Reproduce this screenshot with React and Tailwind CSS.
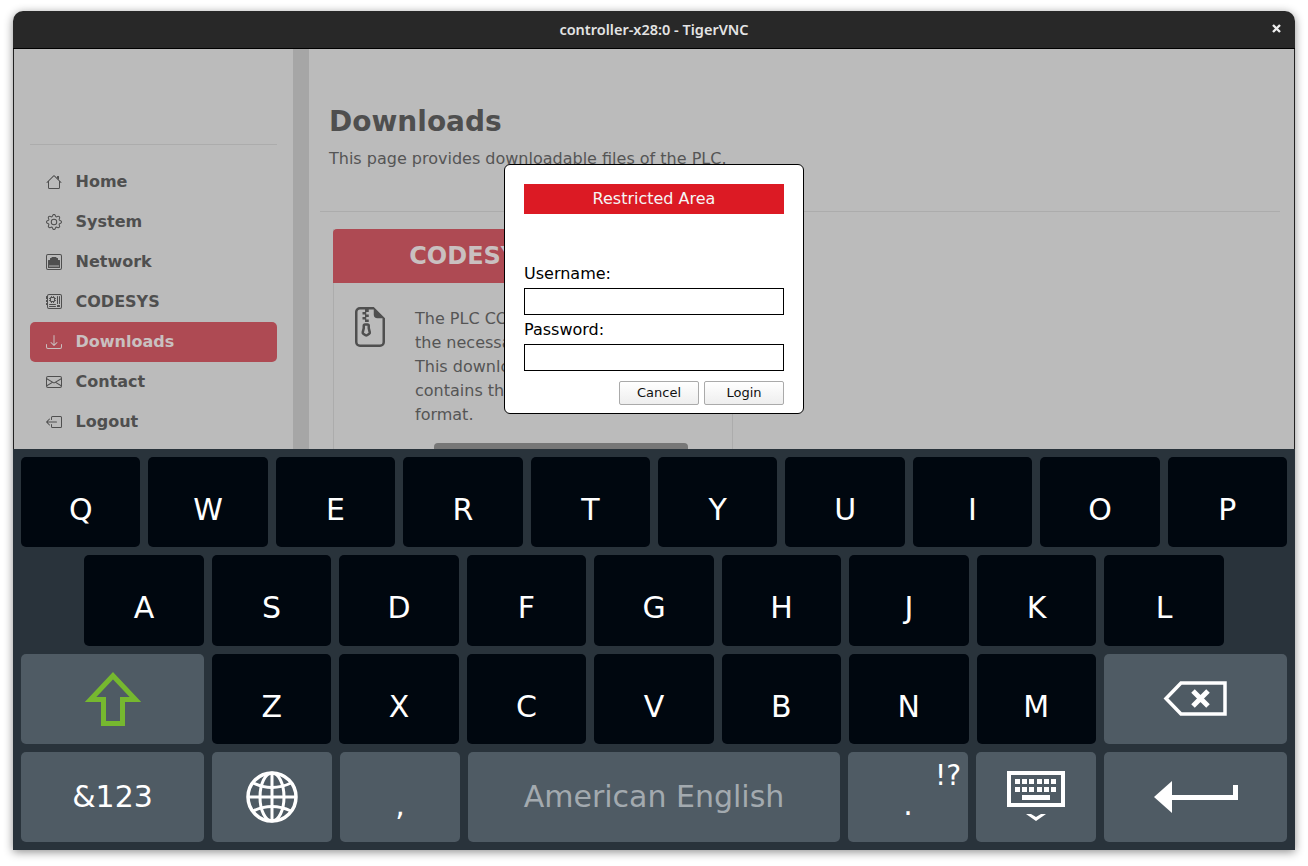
import React from 'react';
import {
  BsGear,
  BsEthernet,
  BsMotherboard,
  BsDownload,
  BsEnvelope,
  BsBoxArrowLeft,
  BsFileEarmarkZip,
} from 'react-icons/bs';

const HouseIcon = ({ size }) => (
  <svg width={size} height={size} viewBox="0 0 16 16" fill="currentColor">
    <path d="M2 13.5V7h1v6.5a.5.5 0 0 0 .5.5h9a.5.5 0 0 0 .5-.5V7h1v6.5a1.5 1.5 0 0 1-1.5 1.5h-9A1.5 1.5 0 0 1 2 13.5zm11-11V6l-2-2V2.5a.5.5 0 0 1 .5-.5h1a.5.5 0 0 1 .5.5z" />
    <path d="M7.293 1.5a1 1 0 0 1 1.414 0l6.647 6.646a.5.5 0 0 1-.708.708L8 2.207 1.354 8.854a.5.5 0 1 1-.708-.708L7.293 1.5z" />
  </svg>
);

const NAV_ITEMS = [
  { label: 'Home', icon: HouseIcon },
  { label: 'System', icon: BsGear },
  { label: 'Network', icon: BsEthernet },
  { label: 'CODESYS', icon: BsMotherboard },
  { label: 'Downloads', icon: BsDownload, active: true },
  { label: 'Contact', icon: BsEnvelope },
  { label: 'Logout', icon: BsBoxArrowLeft },
];

const ROW_1 = ['Q', 'W', 'E', 'R', 'T', 'Y', 'U', 'I', 'O', 'P'];
const ROW_2 = ['A', 'S', 'D', 'F', 'G', 'H', 'J', 'K', 'L'];
const ROW_3 = ['Z', 'X', 'C', 'V', 'B', 'N', 'M'];

const ShiftIcon = () => (
  <svg width="56" height="54" viewBox="0 0 56 54" fill="none">
    <path d="M28 3.7 L50.5 27.5 H37.5 V51.5 H18.5 V27.5 H5.5 Z" stroke="#76b82f" strokeWidth="5" strokeLinejoin="miter" />
  </svg>
);

const BackspaceIcon = () => (
  <svg width="64" height="35" viewBox="0 0 64 35" fill="none">
    <path d="M62 2 H18 L3 17.5 L18 33 H62 Z" stroke="#fff" strokeWidth="3.5" />
    <path d="M30 10 L45 25 M45 10 L30 25" stroke="#fff" strokeWidth="5" />
  </svg>
);

const GlobeIcon = () => (
  <svg width="52" height="52" viewBox="0 0 52 52" fill="none" stroke="#fff" strokeWidth="3">
    <circle cx="26" cy="26" r="24" strokeWidth="3.5" />
    <ellipse cx="26" cy="26" rx="12" ry="24" />
    <path d="M26 2 V50 M2 26 H50" />
    <path d="M7 12 Q26 21 45 12 M7 40 Q26 31 45 40" />
  </svg>
);

const KeyboardIcon = () => (
  <svg width="58" height="50" viewBox="0 0 58 50" fill="#fff" className="mb-[2px]">
    <rect x="2" y="2" width="54" height="32" fill="none" stroke="#fff" strokeWidth="4" />
    {[8, 15, 22, 30, 37, 44].map((x) => (
      <React.Fragment key={x}>
        <rect x={x} y="8" width="5" height="5" />
        <rect x={x} y="16" width="5" height="5" />
      </React.Fragment>
    ))}
    <rect x="15" y="24" width="28" height="5" />
    <path d="M19 43 H24 L29 46 L34 43 H39 L29 50 Z" />
  </svg>
);

const EnterIcon = () => (
  <svg width="84" height="32" viewBox="0 0 84 32" fill="#fff">
    <path d="M0 16 L18 0 V14 H79 V4 H84 V19 H18 V32 Z" />
  </svg>
);

const Key = ({ children, dark, className = '' }) => (
  <div
    className={`relative flex items-center justify-center rounded-[5px] ${
      dark ? 'bg-[#00070f]' : 'bg-[#4f5b64]'
    } ${className}`}
  >
    {children}
  </div>
);

const KeyLabel = ({ children }) => <span className="pt-[16px] text-[30px] leading-[36px]">{children}</span>;

const Sidebar = () => (
  <aside className="w-[279px] shrink-0 bg-[#bbbbbb] px-4 pt-[95px]">
    <div className="border-t border-[#acacac] pt-[17px]">
      {NAV_ITEMS.map(({ label, icon: Icon, active }) => (
        <div
          key={label}
          className={`flex h-10 items-center gap-[14px] rounded-[5px] pl-4 text-base font-bold ${
            active ? 'bg-[#ae4a53] text-[#c9c0c0]' : 'text-[#4f4f4f]'
          }`}
        >
          <Icon size={16} />
          <span className="-ml-[0.5px]">{label}</span>
        </div>
      ))}
    </div>
  </aside>
);

const MainPage = () => (
  <main className="min-w-0 flex-1 bg-[#bbbbbb] pl-[11px] pr-[14px] pt-[56px] text-[#555555]">
    <div className="border-b border-[#acacac] pb-[40px] pl-[9px]">
      <h1 className="text-[28px] font-bold leading-[34px] text-[#4f4f4f]">Downloads</h1>
      <p className="mt-2 text-base leading-6">This page provides downloadable files of the PLC.</p>
    </div>
    <div className="ml-[13px] mt-[17px] w-[400px] border-x border-[#acacac]">
      <div className="-mx-px flex h-[54px] items-center justify-center rounded-t-[4px] bg-[#ae4a53] text-2xl font-bold text-[#c9c0c0]">
        CODESYS Package
      </div>
      <div className="flex gap-[25px] pl-[16px] pt-[24px]">
        <BsFileEarmarkZip size={40} className="shrink-0 text-[#4f4f4f]" />
        <p className="text-base leading-6">
          The PLC CODESYS Runtime
          <br />
          the necessary libraries
          <br />
          This download package
          <br />
          contains them in ZIP
          <br />
          format.
        </p>
      </div>
      <div className="ml-[100px] mt-[16px] h-10 w-[254px] rounded-t-[4px] bg-[#777777]" />
    </div>
  </main>
);

const LoginDialog = () => (
  <div className="absolute left-[490px] top-[115px] h-[250px] w-[300px] rounded-[6px] border border-black bg-white px-[19px] pt-[19px] text-black">
    <div className="flex h-[30px] items-center justify-center bg-[#dc1a24] text-base text-[#f5f5f5]">Restricted Area</div>
    <label className="mt-[48px] block text-base leading-[24px]">Username:</label>
    <div className="mt-[2px] h-[27px] border border-black bg-white" />
    <label className="mt-[3px] block text-base leading-[24px]">Password:</label>
    <div className="mt-[2px] h-[27px] border border-black bg-white" />
    <div className="mt-[10px] flex justify-end gap-[5px]">
      {['Cancel', 'Login'].map((text) => (
        <button
          key={text}
          className="h-6 w-20 rounded-[2px] border border-[#aaaaaa] bg-gradient-to-b from-white to-[#eeeeee] text-[13px] text-[#111111]"
        >
          {text}
        </button>
      ))}
    </div>
  </div>
);

const Keyboard = () => (
  <div className="grid flex-1 grid-rows-4 gap-2 bg-[#29333b] p-2 text-white">
    <div className="flex gap-2">
      {ROW_1.map((k) => (
        <Key key={k} dark className="flex-1">
          <KeyLabel>{k}</KeyLabel>
        </Key>
      ))}
    </div>
    <div className="flex justify-center gap-2">
      {ROW_2.map((k) => (
        <Key key={k} dark className="w-[119.5px]">
          <KeyLabel>{k}</KeyLabel>
        </Key>
      ))}
    </div>
    <div className="flex gap-2">
      <Key className="w-[183px] shrink-0">
        <ShiftIcon />
      </Key>
      {ROW_3.map((k) => (
        <Key key={k} dark className="flex-1">
          <KeyLabel>{k}</KeyLabel>
        </Key>
      ))}
      <Key className="w-[183px] shrink-0">
        <BackspaceIcon />
      </Key>
    </div>
    <div className="flex gap-2">
      <Key className="w-[183px] shrink-0">
        <span className="text-[30px] leading-[36px]">&amp;123</span>
      </Key>
      <Key className="w-[120px] shrink-0">
        <GlobeIcon />
      </Key>
      <Key className="w-[120px] shrink-0">
        <KeyLabel>,</KeyLabel>
      </Key>
      <Key className="flex-1">
        <span className="text-[30px] leading-[36px] text-[#a3aaaf]">American English</span>
      </Key>
      <Key className="w-[120px] shrink-0">
        <KeyLabel>.</KeyLabel>
        <span className="absolute right-[7px] top-[8px] text-[28px] leading-[32px]">!?</span>
      </Key>
      <Key className="w-[120px] shrink-0">
        <KeyboardIcon />
      </Key>
      <Key className="w-[183px] shrink-0">
        <EnterIcon />
      </Key>
    </div>
  </div>
);

export default function App() {
  return (
    <div className="h-[866px] overflow-hidden bg-white pl-[13px] pt-[11px] font-['DejaVu_Sans',sans-serif]">
      <div className="flex h-[839px] w-[1282px] flex-col overflow-hidden rounded-t-[10px] shadow-[0_2px_10px_rgba(0,0,0,0.45)]">
        <header className="relative flex h-[38px] shrink-0 items-center justify-center border-b border-black bg-[#282828] font-['Noto_Sans',sans-serif] text-[14.5px] font-semibold text-[#e4e4e4]">
          <span>controller-x28:0 - TigerVNC</span>
          <span className="absolute right-[13px] top-[12px]">
            <svg width="11" height="11" viewBox="0 0 11 11" stroke="#eeeeee" strokeWidth="2.4">
              <path d="M2 2 L9 9 M9 2 L2 9" />
            </svg>
          </span>
        </header>
        <div className="relative flex h-[400px] shrink-0 overflow-hidden border-x border-[#222222]">
          <Sidebar />
          <div className="w-4 shrink-0 bg-[#a6a6a6]" />
          <MainPage />
          <LoginDialog />
        </div>
        <Keyboard />
      </div>
    </div>
  );
}
